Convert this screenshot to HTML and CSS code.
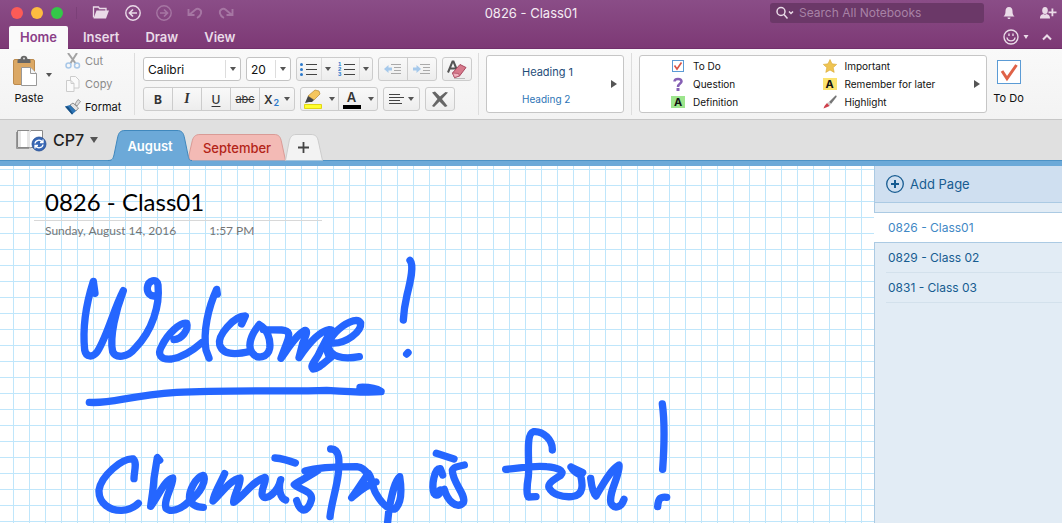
FILE: index.html
```html
<!DOCTYPE html>
<html lang="en">
<head>
    <meta charset="UTF-8">
    <meta name="viewport" content="width=device-width, initial-scale=1.0">
    <title>0826 - Class01</title>
    <link rel="stylesheet" href="styles.css">
</head>
<body>
    <header class="app-header">
        <div class="title-bar">
            <div class="title-left">
                <div class="lights"><span class="light red"></span><span class="light yellow"></span><span class="light green"></span></div>
                <div class="quick">
                    <button class="icon-btn"><svg width="18" height="15" viewBox="0 0 18 15"><path d="M1.500 12.500V2h5l1 1.500h6.500V6" fill="none" stroke="#eadbe8" stroke-width="1.300"/><path d="M4.500 5.500H17L14 13.500H1.500z" fill="#eadbe8"/></svg></button>
                    <button class="icon-btn"><svg width="16" height="16" viewBox="0 0 16 16" fill="none" stroke="#eadbe8" stroke-width="1.400"><circle cx="8" cy="8" r="7.200"/><path d="M12 8H4.500M8 4.500L4.500 8 8 11.500" stroke-width="1.700"/></svg></button>
                    <button class="icon-btn" disabled><svg width="16" height="16" viewBox="0 0 16 16" fill="none" stroke="#a676a3" stroke-width="1.400"><circle cx="8" cy="8" r="7.200"/><path d="M4 8h7.500M8 4.500L11.500 8 8 11.500" stroke-width="1.700"/></svg></button>
                    <button class="icon-btn" disabled><svg width="16" height="14" viewBox="0 0 16 14" fill="none" stroke="#a676a3" stroke-width="1.900"><path d="M1.500 3v6H7.500M2 9L8 4C11 1.500 15 3.500 14 7.500 13.500 9.500 12 11 10 12"/></svg></button>
                    <button class="icon-btn" disabled><svg width="16" height="14" viewBox="0 0 16 14" fill="none" stroke="#a676a3" stroke-width="1.900"><path d="M14.500 3v6H8.500M14 9L8 4C5 1.500 1 3.500 2 7.500 2.500 9.500 4 11 6 12"/></svg></button>
                </div>
            </div>
            <h1 class="window-title">0826 - Class01</h1>
            <div class="title-right">
                <label class="search">
                    <svg width="18" height="14" viewBox="0 0 18 14" fill="none" stroke="#eadbe8" stroke-width="1.500"><circle cx="5" cy="5.500" r="4"/><path d="M8 8.500l3.500 4M13 5.500l2 2 2-2"/></svg>
                    <input type="search" placeholder="Search All Notebooks" aria-label="Search All Notebooks">
                </label>
                <button class="icon-btn bell"><svg width="12" height="14" viewBox="0 0 12 14" fill="#eadbe8"><path d="M6 1C3.500 1 2.500 3 2.500 5c0 3-.5 4-2 5.500h11C10 9 9.500 8 9.500 5 9.500 3 8.500 1 6 1zM4.500 11.500h3c0 2-3 2-3 0z"/></svg></button>
                <button class="icon-btn"><svg width="18" height="14" viewBox="0 0 18 14" fill="#eadbe8"><ellipse cx="6" cy="4.500" rx="2.800" ry="3.500"/><path d="M1 12.500C1 9 2.500 8.500 4.500 8c1 .8 2 .8 3 0 2 .5 3.500 1 3.500 4.500zM12.500 2.500h1.800v3h3.200v1.800h-3.200v3h-1.800v-3H9.500V5.500h3z"/></svg></button>
            </div>
        </div>
        <div class="tab-bar">
            <nav class="ribbon-tabs">
                <button class="ribbon-tab active">Home</button>
                <button class="ribbon-tab">Insert</button>
                <button class="ribbon-tab">Draw</button>
                <button class="ribbon-tab">View</button>
            </nav>
            <div class="tab-tools">
                <button class="icon-btn"><svg width="26" height="16" viewBox="0 0 26 16" fill="none" stroke="#eadbe8" stroke-width="1.400"><circle cx="8" cy="8" r="7"/><path d="M4 8.500c.5 4.500 7.500 4.500 8 0M6 4.500v2.500M10 4.500v2.500"/><path d="M20.500 6h5L23 10z" fill="#eadbe8" stroke="none"/></svg></button>
                <button class="icon-btn"><svg width="12" height="8" viewBox="0 0 12 8" fill="none" stroke="#eadbe8" stroke-width="2"><path d="M2 6.500l4-4 4 4"/></svg></button>
            </div>
        </div>
    </header>

    <section class="ribbon">
        <div class="clipboard">
            <button class="paste">
                <svg width="26" height="32" viewBox="0 0 26 32"><rect x="1.500" y="4.500" width="21" height="25" rx="1.500" fill="#dba865" stroke="#bd8b4d"/><path d="M5.500 8V5.500C5.500 4 7 4 8.500 4c0-4.500 7-4.500 7 0 2 0 3 0 3 1.500V8z" fill="#666"/><circle cx="12" cy="3.500" r="1" fill="#ddd"/><path d="M9.500 12.500h9l6 6v12h-15z" fill="#fff" stroke="#999"/><path d="M18.500 12.500v6h6" fill="#f4f4f4" stroke="#999"/></svg>
                <span>Paste</span>
            </button>
            <button class="arrow-btn"><span class="arrow"></span></button>
            <div class="clip-actions">
                <button class="clip-btn" disabled><svg width="16" height="16" viewBox="0 0 16 16" fill="none"><path d="M3 0l8 11M12 0L5 11" stroke="#a3a3a3" stroke-width="2"/><circle cx="3.500" cy="12.500" r="2.500" stroke="#a9c8e8" stroke-width="1.500"/><circle cx="12" cy="12.500" r="2.500" stroke="#a9c8e8" stroke-width="1.500"/></svg>Cut</button>
                <button class="clip-btn" disabled><svg width="16" height="16" viewBox="0 0 16 16" fill="#fafafa" stroke="#ccc"><path d="M5.500.500h5l3.500 3.500v8H5.500z"/><path d="M1.500 4.500h4.500l3 3v8H1.500zM6 4.500v3h3"/></svg>Copy</button>
                <button class="clip-btn"><svg width="16" height="16" viewBox="0 0 16 16"><path d="M10 5l3-4.500 2.500 2L12 7z" fill="#ddd" stroke="#888" stroke-width=".8"/><path d="M5 6l3-2 5.500 5L11 12z" fill="#e2e2e2" stroke="#777" stroke-width=".8"/><path d="M0 7.500L5 6l6 6-4 3.500z" fill="#2e75b6"/><path d="M0 7.500l7 8 1-1-5-7z" fill="#174f83"/></svg>Format</button>
            </div>
        </div>

        <div class="format-group">
            <div class="format-row">
                <div class="select-wrap font-name"><select aria-label="Font"><option>Calibri</option></select><span class="arrow"></span></div>
                <div class="select-wrap font-size"><select aria-label="Font size"><option>20</option></select><span class="arrow"></span></div>
                <div class="btn-group">
                    <button class="w23"><svg width="18" height="14" viewBox="0 0 18 14"><path d="M6 2.500h11M6 7.500h11M6 12.500h11" stroke="#444"/><g fill="#2b79cc"><circle cx="1.500" cy="2.500" r="1.500"/><circle cx="1.500" cy="7.500" r="1.500"/><circle cx="1.500" cy="12.500" r="1.500"/></g></svg></button>
                    <button class="drop"><span class="arrow"></span></button>
                    <button class="w25"><svg width="18" height="16" viewBox="0 0 18 16"><path d="M6 3.500h11M6 8.500h11M6 13.500h11" stroke="#444" /><g class="list-digits"><text x="0" y="5">1</text><text x="0" y="10">2</text><text x="0" y="15">3</text></g></svg></button>
                    <button class="drop"><span class="arrow"></span></button>
                </div>
                <div class="btn-group">
                    <button class="w29" disabled><svg width="18" height="12" viewBox="0 0 18 12"><path d="M7 1.500h10M10 4.500h7M10 7.500h7M7 10.500h10" stroke="#aaa"/><path d="M0 6l4.500-4v2.500H8v3H4.500V10z" fill="#a6c9eb"/></svg></button>
                    <button class="w29 split" disabled><svg width="18" height="12" viewBox="0 0 18 12"><path d="M7 1.500h10M10 4.500h7M10 7.500h7M7 10.500h10" stroke="#aaa"/><path d="M8 6L3.500 2v2.500H0v3h3.500V10z" fill="#a6c9eb"/></svg></button>
                </div>
                <div class="btn-group">
                    <button class="w29"><svg width="20" height="19" viewBox="0 0 20 19"><path d="M1 12.500L5.500 1.500h1L11 12.500M3 8.500h6" fill="none" stroke="#555" stroke-width="2"/><path d="M7 18.500h11" stroke="#bbb"/><path d="M5.500 13L13 4.500l6 3L12.500 16l-5 1.500z" fill="#d77a8c" stroke="#a94860"/><path d="M5.500 13l6 .5 1 2.500-5 1.500z" fill="#f0b3bf" stroke="#a94860" stroke-width=".7"/></svg></button>
                </div>
            </div>
            <div class="format-row">
                <div class="btn-group">
                    <button class="w29 bold">B</button>
                    <button class="w29 italic split">I</button>
                    <button class="w29 underline split">U</button>
                    <button class="w29 strike split">abc</button>
                    <button class="w36 subscript split">X<sub>2</sub><span class="arrow"></span></button>
                </div>
                <div class="btn-group">
                    <button class="w23"><svg width="20" height="20" viewBox="0 0 20 20"><path d="M5 7l7-6 4 1 1 3-6 6z" fill="#f5c65d" stroke="#b58b35" stroke-width=".7"/><path d="M5 7l6 4-2 2H6l-4 1z" fill="#444"/><path d="M1.500 15.500h17v4h-17z" fill="#ffff2e" stroke="#e0d616"/></svg></button>
                    <button class="drop plain"><span class="arrow"></span></button>
                    <button class="w25 split"><span class="font-color">A</span></button>
                    <button class="drop plain"><span class="arrow"></span></button>
                </div>
                <div class="btn-group">
                    <button class="w36"><svg width="15" height="12" viewBox="0 0 15 12"><path d="M0 1.500h11M0 4.500h15M0 7.500h11M0 10.500h13" stroke="#444"/></svg><span class="arrow"></span></button>
                </div>
                <div class="btn-group">
                    <button class="w29"><svg width="18" height="17" viewBox="0 0 18 17"><path d="M1 1.500l3-1L9 5.500 14.500 1l2.500.500L11 8l5.500 7-2.500 1L8.500 10.500 3 16l-2-1L6.500 8z" fill="#666"/></svg></button>
                </div>
            </div>
        </div>

        <div class="styles-group">
            <div class="gallery style-gallery">
                <div class="style-list">
                    <button class="heading-one">Heading 1</button>
                    <button class="heading-two">Heading 2</button>
                </div>
                <button class="more"><span class="more-arrow"></span></button>
            </div>
        </div>

        <div class="tags-group">
            <div class="gallery tag-gallery">
                <div class="tag-list">
                    <button class="tag"><svg width="12" height="12" viewBox="0 0 12 12"><rect x=".5" y=".5" width="11" height="11" fill="#fff" stroke="#5b9bd5"/><path d="M2.500 5.500L5 9l4.500-6.500" fill="none" stroke="#d85346" stroke-width="1.600"/></svg>To Do</button>
                    <button class="tag"><svg width="12" height="14" viewBox="0 0 12 14"><path d="M2.500 4.500C2.500 1 9.500 1 9.500 4.500 9.500 6.500 6 6.500 6 10" fill="none" stroke="#8660b5" stroke-width="2.500"/><path d="M4.500 11h3v3h-3z" fill="#8660b5"/></svg>Question</button>
                    <button class="tag"><span class="letter green-letter">A</span>Definition</button>
                </div>
                <div class="tag-list">
                    <button class="tag"><svg width="14" height="14" viewBox="0 0 14 14"><path d="M7 .5l2 4.300 4.700.6-3.500 3.200 1 4.800L7 11l-4.200 2.400 1-4.800L.3 5.400 5 4.800z" fill="#efc452" stroke="#d6a734" stroke-width=".6"/></svg>Important</button>
                    <button class="tag"><span class="letter yellow-letter">A</span>Remember for later</button>
                    <button class="tag"><svg width="14" height="14" viewBox="0 0 14 14"><path d="M6 7l6-6c1-1 2 0 1.500 1L8 9z" fill="#777"/><path d="M4 8l2-1 2 2-1.500 2z" fill="#ccc"/><path d="M4 8l2.500 3L3 12.500.500 13.500 1.500 11z" fill="#ce3f4a"/></svg>Highlight</button>
                </div>
                <button class="more"><span class="more-arrow"></span></button>
            </div>
            <button class="todo"><svg width="24" height="24" viewBox="0 0 24 24"><rect x=".5" y=".5" width="23" height="23" fill="#fff" stroke="#5b9bd5"/><path d="M5 11l5 7.500L19.500 5" fill="none" stroke="#df6247" stroke-width="3"/></svg><span>To Do</span></button>
        </div>
    </section>

    <div class="section-bar">
        <button class="notebook">
            <svg width="32" height="24" viewBox="0 0 32 24"><path d="M2.500 2.500H14l1 1 1-1h11.500v17H16l-1 .5-1-.5H2.500z" fill="#fff" stroke="#888"/><path d="M1.500 4v16.500H14" fill="none" stroke="#999"/><path d="M3 3h3v16H3zM12 3h3v16h-3z" fill="#e6e6e6"/><circle cx="24" cy="16" r="7" fill="#3767b5" stroke="#254c91" stroke-width=".8"/><path d="M20 15.500c.5-3.500 5-4.500 7.500-1.500M28 11.500v3h-3M28 16.500c-.5 3.500-5 4.500-7.500 1.500M20 20.500v-3h3" fill="none" stroke="#fff" stroke-width="1.300"/></svg>
            CP7 <span class="arrow big"></span>
        </button>
        <nav class="sections">
            <button class="section-tab august"><svg viewBox="0 0 84 31" preserveAspectRatio="none"><path d="M0 31C5 31 5 28 6 25L9.500 8C10.500 3 12 .5 17 .5h52c5 0 6.500 2.500 7.500 7.500L80 25c1 4 1 6 4 6z" fill="#6ca9d8"/><path d="M0 30.500C5 30.500 5 28 6 25L9.500 8C10.500 3 12 .5 17 .5h52c5 0 6.500 2.500 7.500 7.500L80 25c1 4 1 5.500 4 5.500" fill="none" stroke="#4088bd"/></svg><span>August</span></button>
            <button class="section-tab september"><svg viewBox="0 0 98 27" preserveAspectRatio="none"><path d="M1 26.500V21L4 8C5 3 7 .5 12 .5h74c5 0 6.500 2.500 7.500 7.500L97.500 26.500" fill="#f3bab5" stroke="#d99b96"/></svg><span>September</span></button>
            <button class="section-tab add"><svg viewBox="0 0 38 27" preserveAspectRatio="none"><path d="M.5 26.500L4 8C5 3 7 .5 11 .5h15c5 0 6.500 2.500 7.500 7.500L37.500 26.500" fill="#f3f3f3" stroke="#ccc"/><path d="M13 13.500h11M18.500 8v11" stroke="#444" stroke-width="1.800"/></svg></button>
        </nav>
    </div>

    <main class="workspace">
        <article class="page">
            <div class="page-head">
                <h2 class="page-title">0826 - Class01</h2>
                <p class="page-date"><span>Sunday, August 14, 2016</span><span>1:57 PM</span></p>
            </div>
            <!-- pen strokes -->
            <svg class="ink" width="640" height="283" viewBox="0 0 1920 849">
                <g class="stroke">
                    <path d="M105 160L100 124C82 180 67 260 74 330C78 352 98 354 112 335C143 285 160 210 190 152C168 210 148 290 158 335C166 355 203 354 225 325C278 272 300 195 294 135C291 114 265 119 262 143C261 159 270 167 282 168"/>
                    <path d="M342 299C364 298 387 270 380 250C361 244 321 285 306 317C290 344 302 360 335 357C373 350 400 330 425 308"/>
                    <path d="M472 162L470 148C444 205 429 275 438 330L447 354"/>
                    <path d="M545 252L556 228C522 228 472 286 479 314C488 345 530 344 570 334"/>
                    <path d="M598 254C572 284 562 318 576 338C591 360 624 352 629 325C633 297 620 265 598 254M610 269L665 270C690 272 690 283 680 310L663 355C685 325 708 285 735 271C745 274 736 290 728 310L717 353C742 316 777 274 808 269C813 280 785 320 775 345C765 363 749 378 759 387C775 387 793 368 815 350"/>
                    <path d="M816 309C858 312 905 275 902 249C891 231 851 250 826 278C802 305 800 319 812 336C833 358 870 355 898 350"/>
                    <path d="M815 270C800 300 795 335 810 350"/>
                    <path d="M1050 61C1063 77 1051 125 1041 165C1033 200 1031 220 1030 240M1040 342L1044 338"/>
                </g>
                <path class="stroke" d="M88 487C158 492 200 467 350 457C500 449 700 455 800 451C860 455 920 459 963 455M900 442C930 441 950 446 963 454"/>
                <g class="stroke" transform="translate(60 450)">
                    <path d="M162 266C162 245 172 219 160 207C127 203 64 257 57 300C55 340 90 362 125 361C150 360 165 350 175 340"/>
                    <path d="M239 211L232 203L222 265C220 300 215 325 212 349C233 323 254 268 278 264C281 286 249 330 258 355C272 368 300 360 325 336C365 308 379 270 370 256C346 261 325 306 329 329C337 348 352 352 370 352"/>
                    <path d="M434 251C424 275 402 308 399 333C420 315 450 269 480 264C484 282 460 315 461 337C490 320 520 271 555 262C562 273 541 297 547 316C557 336 594 306 602 269C594 293 600 324 617 330M585 204C610 206 630 213 646 219"/>
                    <path d="M675 243C720 230 790 230 830 230C849 233 856 241 860 250M715 240C690 258 655 275 643 284C660 300 700 302 694 330C689 350 678 362 668 360C655 354 654 342 650 332"/>
                    <path d="M752 177C785 175 776 230 775 250C770 296 756 330 750 380"/>
                    <path d="M888 276C860 284 840 302 815 323C833 300 850 271 865 250C876 261 876 290 887 309C902 336 922 360 945 357C966 339 965 298 959 260C943 274 935 318 927 357L922 405"/>
                </g>
                <g class="stroke" transform="translate(1050 450)">
                    <path d="M98 255L91 236C73 233 64 287 72 310C81 323 94 308 91 300M79 190L132 207"/>
                    <path d="M163 225C150 228 130 230 127 241C127 278 170 315 160 338C141 360 112 332 103 298"/>
                    <path d="M427 180C428 150 400 122 370 125C345 132 360 220 355 260C350 290 350 320 355 321L378 320M287 238C330 235 370 225 410 230C440 233 467 241 452 256C438 265 412 279 417 293C427 313 455 322 485 320C523 317 518 281 512 256C502 251 490 244 483 231M483 231L518 248"/>
                    <path d="M542 265C545 290 550 310 558 318C575 290 600 240 627 225C632 254 594 307 603 340C615 360 635 350 642 328"/>
                    <path d="M757 42C765 100 762 180 758 238M743 350C745 325 750 320 770 322"/>
                </g>
            </svg>
        </article>
        <aside class="pages">
            <button class="add-page"><svg width="18" height="18" viewBox="0 0 18 18" fill="none" stroke="#175c91"><circle cx="9" cy="9" r="8.300" stroke-width="1.300"/><path d="M5 9h8M9 5v8" stroke-width="2"/></svg>Add Page</button>
            <nav class="page-list">
                <a href="#" class="page-link active">0826 - Class01</a>
                <a href="#" class="page-link">0829 - Class 02</a>
                <a href="#" class="page-link">0831 - Class 03</a>
            </nav>
        </aside>
    </main>
</body>
</html>
```
FILE: styles.css
```css
* {
    box-sizing: border-box;
}

body {
    margin: 0;
    height: 100vh;
    display: flex;
    flex-direction: column;
    overflow: hidden;
    font-family: Inter, Roboto, "Liberation Sans", sans-serif;
    font-size: 12px;
    color: #111;
}

button, input, select {
    font: inherit;
    color: inherit;
    border: none;
    background: none;
    padding: 0;
    margin: 0;
}

svg {
    display: block;
    flex: none;
}

/* header */
.app-header {
    background: linear-gradient(#8a4d87, #7d3975);
    border-bottom: 1px solid #71306b;
    color: #eadbe8;
}

.title-bar {
    display: grid;
    grid-template-columns: 1fr auto 1fr;
    align-items: center;
    height: 25px;
}

.title-left, .title-right, .quick, .lights, .tab-tools {
    display: flex;
    align-items: center;
}

.lights {
    gap: 8px;
    padding: 0 13px 0 11px;
    border-right: 1px solid #7b4078;
}

.light {
    width: 12px;
    height: 12px;
    border-radius: 50%;
}

.red { background: #fc5b57; }
.yellow { background: #fdbc40; }
.green { background: #33c748; }

.quick {
    gap: 15px;
    padding-left: 15px;
}

.window-title {
    margin: 0;
    font-size: 13px;
    font-weight: 400;
    color: #f5ecf4;
}

.title-right {
    justify-content: flex-end;
    gap: 24px;
    padding-right: 5px;
}

.title-right .bell {
    margin-left: -5px;
}

.search {
    display: flex;
    align-items: center;
    gap: 5px;
    width: 214px;
    height: 20px;
    padding-left: 6px;
    background: #6b3868;
    border-radius: 3px;
}

.search input {
    flex: 1;
    min-width: 0;
    outline: none;
}

.search input::placeholder {
    color: #a882a6;
    opacity: 1;
}

.tab-bar {
    display: flex;
    justify-content: space-between;
    height: 23px;
    padding: 0 9px;
}

.ribbon-tabs {
    display: flex;
    gap: 4px;
    padding-top: 1px;
}

.ribbon-tab {
    padding: 0 11px;
    font-size: 13px;
    font-weight: 600;
}

.ribbon-tab.active {
    background: #fafafa;
    color: #8a4087;
    border-radius: 2px 2px 0 0;
    margin-bottom: -1px;
    padding-bottom: 1px;
}

.tab-tools {
    gap: 12px;
}

/* ribbon */
.ribbon {
    display: flex;
    height: 71px;
    padding: 4px 0;
    background: linear-gradient(#f9f9f9, #f3f3f3);
    border-bottom: 1px solid #c6c6c6;
}

.clipboard {
    display: flex;
    width: 135px;
    padding-left: 12px;
    border-right: 1px solid #ddd;
}

.paste {
    display: flex;
    flex-direction: column;
    align-items: center;
    gap: 4px;
    width: 34px;
    padding-top: 2px;
    font-size: 11px;
}

.paste svg {
    margin-right: 8px;
}

.arrow-btn {
    width: 5px;
    height: 38px;
}

.arrow {
    display: inline-block;
    flex: none;
    border: 3px solid transparent;
    border-top: 4px solid #555;
    border-bottom: none;
}

.arrow.big {
    border-width: 6px 4px 0;
}

.clip-actions {
    display: flex;
    flex-direction: column;
    gap: 7px;
    padding-left: 14px;
}

.clip-btn {
    display: flex;
    align-items: center;
    gap: 4px;
    height: 16px;
    font-size: 11px;
}

.clip-btn:disabled {
    color: #8b8b8b;
}

.format-group {
    display: flex;
    flex-direction: column;
    gap: 6px;
    width: 344px;
    padding: 4px 0 0 8px;
    border-right: 1px solid #ddd;
}

.format-row {
    display: flex;
    gap: 5px;
}

.select-wrap {
    display: flex;
    align-items: center;
    height: 24px;
    padding-right: 4px;
    background: #fff;
    border: 1px solid #c3c3c3;
    border-radius: 3px;
}

.font-name { width: 98px; }
.font-size { width: 45px; }

.select-wrap select {
    flex: 1;
    min-width: 0;
    height: 18px;
    margin-right: 4px;
    padding-left: 4px;
    appearance: none;
    border-right: 1px solid #ddd;
    outline: none;
}

.btn-group {
    display: flex;
    height: 24px;
    background: linear-gradient(#f9f9f9, #ededed);
    border: 1px solid #ccc;
    border-radius: 3px;
}

.btn-group button {
    display: flex;
    align-items: center;
    justify-content: center;
    gap: 4px;
    color: #333;
}

.btn-group .w23 { width: 24px; }
.btn-group .w25 { width: 25px; }
.btn-group .w29 { width: 28px; }
.btn-group .w36 { width: 35px; }

.btn-group .split {
    width: 29px;
    border-left: 1px solid #ccc;
}

.btn-group .w25.split {
    width: 26px;
}

.btn-group .w36.split {
    width: 35px;
    gap: 1px;
}

.btn-group .drop {
    width: 13px;
    border-left: 1px solid #ddd;
}

.btn-group .plain {
    border-left-color: transparent;
}

.list-digits {
    font: bold 6px "Liberation Sans", sans-serif;
    fill: #2b79cc;
}

.btn-group .bold { font-weight: 700; }
.btn-group .italic { font: italic bold 14px "Liberation Serif", serif; }
.btn-group .underline { text-decoration: underline; text-underline-offset: 2px; font-weight: 500; }
.btn-group .strike { text-decoration: line-through; font-size: 11px; }
.btn-group .subscript { font-weight: 600; }

.subscript sub {
    padding-top: 6px;
    font-size: 9px;
    color: #2b79cc;
    vertical-align: baseline;
}

.subscript .arrow {
    margin-left: 4px;
}

.font-color {
    height: 19px;
    width: 18px;
    border-bottom: 4px solid #000;
    font-size: 13px;
    font-weight: 600;
    line-height: 14px;
}

.styles-group {
    width: 153px;
    padding: 2px 7px;
    border-right: 1px solid #ddd;
}

.gallery {
    display: flex;
    height: 58px;
    padding-right: 6px;
    background: #fff;
    border: 1px solid #c6c6c6;
    border-radius: 3px;
}

.style-list {
    flex: 1;
    display: flex;
    flex-direction: column;
    align-items: flex-start;
    gap: 10px;
    padding: 8px 0 0 35px;
}

.heading-one {
    color: #1f4e79;
    font-size: 11px;
    line-height: 17px;
}

.heading-two {
    color: #2e75b6;
    font-size: 10px;
    line-height: 17px;
}

.more-arrow {
    display: block;
    border: 4px solid transparent;
    border-left: 6px solid #555;
    border-right: none;
}

.tags-group {
    display: flex;
    flex: 1;
    gap: 7px;
    padding: 2px 39px 2px 7px;
}

.tag-gallery {
    flex: 1;
    padding-left: 31px;
}

.tag-list {
    flex: 1;
    padding-top: 1px;
}

.tag {
    display: flex;
    align-items: center;
    gap: 8px;
    height: 18px;
    font-size: 10px;
}

.tag svg, .letter {
    width: 14px;
}

.letter {
    height: 12px;
    font-weight: 700;
    font-size: 11px;
    line-height: 12px;
    text-align: center;
}

.green-letter { background: #9de58d; }
.yellow-letter { background: #fbe36f; }

.todo {
    display: flex;
    flex-direction: column;
    align-items: center;
    gap: 7px;
    width: 29px;
    padding-top: 5px;
    font-size: 11px;
    white-space: nowrap;
}

/* notebook sections */
.section-bar {
    display: flex;
    height: 46px;
    padding-left: 15px;
    background: #e0e0e0;
    border-bottom: 5px solid #6ca9d8;
    box-shadow: inset 0 -1px #4d92c5;
}

.notebook {
    display: flex;
    align-items: center;
    gap: 6px;
    width: 93px;
    height: 40px;
    font-size: 16px;
    font-weight: 500;
    color: #222;
}

.sections {
    display: flex;
    align-items: flex-end;
}

.section-tab {
    position: relative;
    height: 27px;
    font-size: 13px;
    font-weight: 600;
}

.section-tab svg {
    position: absolute;
    inset: 0;
    width: 100%;
    height: 100%;
}

.section-tab span {
    position: relative;
}

.section-tab.august {
    width: 84px;
    height: 31px;
    color: #fff;
    z-index: 1;
}

.section-tab.september {
    width: 98px;
    margin-left: -4px;
    color: #b32418;
    font-weight: 500;
}

.section-tab.add {
    width: 38px;
    margin-left: -1px;
}

/* workspace */
.workspace {
    flex: 1;
    display: flex;
    min-height: 0;
}

.page {
    position: relative;
    flex: 1;
    overflow: hidden;
    background-color: #fff;
    background-image: linear-gradient(#bfe6fb 1px, transparent 1px), linear-gradient(90deg, #bfe6fb 1px, transparent 1px);
    background-size: 16px 16px;
    background-position: 13px 3px;
}

.page-head {
    width: 322px;
    padding: 19px 0 0 34px;
    font-family: Lato, "Open Sans", sans-serif;
}

.page-title {
    margin: 0;
    height: 36px;
    padding-left: 11px;
    border-bottom: 1px solid #d8d8d8;
    font-size: 24px;
    line-height: 34px;
    font-weight: 400;
    color: #000;
}

.page-date {
    display: flex;
    gap: 33px;
    margin: 0;
    padding: 1px 0 0 11px;
    font-size: 12px;
    line-height: 17px;
    color: #767676;
}

.ink {
    position: absolute;
    left: 60px;
    top: 74px;
}

.stroke {
    fill: none;
    stroke: #2566ff;
    stroke-width: 22;
    stroke-linecap: round;
    stroke-linejoin: round;
}

.pages {
    width: 188px;
    background: #e2ecf5;
    color: #175c91;
    font-size: 12px;
    box-shadow: inset 1px 0 #abcae3;
}

.add-page {
    display: flex;
    align-items: center;
    gap: 6px;
    width: 100%;
    height: 37px;
    padding-left: 11px;
    background: #cfdff0;
    border: solid #abcae3;
    border-width: 0 0 1px 1px;
    font-size: 13px;
}

.page-list {
    padding-top: 9px;
}

.page-link {
    display: block;
    margin-left: 12px;
    padding-left: 2px;
    line-height: 29px;
    border-bottom: 1px solid #d3e1ec;
    color: #175c91;
    text-decoration: none;
}

.page-link.active {
    margin-left: 0;
    padding: 1px 0 0 14px;
    background: #fff;
    border-top: 1px solid #abcae3;
    border-bottom-color: #abcae3;
    color: #3f88c5;
    line-height: 28px;
}
```
